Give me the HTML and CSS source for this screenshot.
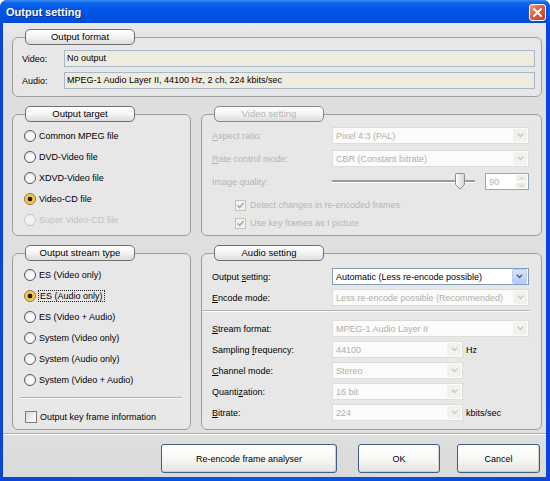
FILE: index.html
```html
<!DOCTYPE html>
<html lang="en">
<head>
  <meta charset="UTF-8" />
  <meta name="viewport" content="width=device-width, initial-scale=1.0" />
  <title>Output setting</title>
  <link rel="stylesheet" href="styles.css">
</head>
<body>
  <div class="window">
    <div class="titlebar">
      <span class="title">Output setting</span>
      <span class="close">
        <svg width="9" height="9" viewBox="0 0 9 9"><path d="M1 1 L8 8 M8 1 L1 8" stroke="#fff" stroke-width="1.8" stroke-linecap="round"/></svg>
      </span>
    </div>

    <div class="client">
      <fieldset class="group format">
        <legend><span>Output format</span></legend>
        <div class="format-body">
          <div class="frow"><span class="flabel">Video:</span><div class="field">No output</div></div>
          <div class="frow"><span class="flabel">Audio:</span><div class="field">MPEG-1 Audio Layer II, 44100 Hz, 2 ch, 224 kbits/sec</div></div>
        </div>
      </fieldset>

      <div class="panes">
        <!-- output target -->
        <fieldset class="group">
          <legend><span>Output target</span></legend>
          <div class="opts">
            <div class="opt"><span class="radio"></span>Common MPEG file</div>
            <div class="opt"><span class="radio"></span>DVD-Video file</div>
            <div class="opt"><span class="radio"></span>XDVD-Video file</div>
            <div class="opt checked"><span class="radio"></span>Video-CD file</div>
            <div class="opt disabled"><span class="radio"></span>Super Video-CD file</div>
          </div>
        </fieldset>

        <!-- video setting (disabled) -->
        <fieldset class="group off">
          <legend><span>Video setting</span></legend>
          <div class="settings video">
            <div class="row">
              <span class="lbl"><u>A</u>spect ratio:</span>
              <div class="combo">
                <span class="val">Pixel 4:3 (PAL)</span>
                <span class="arrow"><svg width="7" height="5" viewBox="0 0 7 5"><path d="M0.8 0.8 L3.5 3.5 L6.2 0.8" fill="none" stroke="currentColor" stroke-width="1.5"/></svg></span>
              </div>
            </div>
            <div class="row">
              <span class="lbl"><u>R</u>ate control mode:</span>
              <div class="combo">
                <span class="val">CBR (Constant bitrate)</span>
                <span class="arrow"><svg width="7" height="5" viewBox="0 0 7 5"><path d="M0.8 0.8 L3.5 3.5 L6.2 0.8" fill="none" stroke="currentColor" stroke-width="1.5"/></svg></span>
              </div>
            </div>
            <div class="row">
              <span class="lbl">Image quality:</span>
              <div class="slider">
                <span class="track left"></span>
                <svg class="thumb" width="10" height="17" viewBox="0 0 10 17">
                  <defs><linearGradient id="tg" x1="0" x2="1"><stop offset="0" stop-color="#fff"/><stop offset="1" stop-color="#d4d4d4"/></linearGradient></defs>
                  <path d="M1.5 0.5 H8.5 Q9.5 0.5 9.5 1.5 V11.5 L5 16.2 L0.5 11.5 V1.5 Q0.5 0.5 1.5 0.5 Z" fill="url(#tg)" stroke="#8c8c8c"/>
                </svg>
                <span class="track"></span>
              </div>
              <div class="spin">
                <span class="val">90</span>
                <span class="spin-btns">
                  <span class="sb"><svg width="5" height="3" viewBox="0 0 5 3"><path d="M0.5 2.5 L2.5 0.5 L4.5 2.5" fill="none" stroke="currentColor"/></svg></span>
                  <span class="sb"><svg width="5" height="3" viewBox="0 0 5 3"><path d="M0.5 0.5 L2.5 2.5 L4.5 0.5" fill="none" stroke="currentColor"/></svg></span>
                </span>
              </div>
            </div>
            <div class="check-row">
              <span class="box on"><svg width="9" height="9" viewBox="0 0 9 9"><path d="M1.5 4.3 L3.6 6.5 L7.6 2" fill="none" stroke="currentColor" stroke-width="1.7"/></svg></span>
              Detect changes in re-encoded frames
            </div>
            <div class="check-row">
              <span class="box on"><svg width="9" height="9" viewBox="0 0 9 9"><path d="M1.5 4.3 L3.6 6.5 L7.6 2" fill="none" stroke="currentColor" stroke-width="1.7"/></svg></span>
              Use key frames as I picture
            </div>
          </div>
        </fieldset>

        <!-- output stream type -->
        <fieldset class="group">
          <legend><span>Output stream type</span></legend>
          <div class="opts">
            <div class="opt"><span class="radio"></span>ES (Video only)</div>
            <div class="opt checked"><span class="radio"></span><span class="focus">ES (Audio only)</span></div>
            <div class="opt"><span class="radio"></span>ES (Video + Audio)</div>
            <div class="opt"><span class="radio"></span>System (Video only)</div>
            <div class="opt"><span class="radio"></span>System (Audio only)</div>
            <div class="opt"><span class="radio"></span>System (Video + Audio)</div>
            <div class="sep"></div>
            <div class="key-row"><span class="box"></span>Output key frame information</div>
          </div>
        </fieldset>

        <!-- audio setting -->
        <fieldset class="group">
          <legend><span>Audio setting</span></legend>
          <div class="settings audio">
            <div class="row">
              <span class="lbl">Output <u>s</u>etting:</span>
              <div class="combo active">
                <span class="val">Automatic (Less re-encode possible)</span>
                <span class="arrow"><svg width="7" height="5" viewBox="0 0 7 5"><path d="M0.8 0.8 L3.5 3.5 L6.2 0.8" fill="none" stroke="currentColor" stroke-width="1.5"/></svg></span>
              </div>
            </div>
            <div class="row">
              <span class="lbl"><u>E</u>ncode mode:</span>
              <div class="combo">
                <span class="val">Less re-encode possible (Recommended)</span>
                <span class="arrow"><svg width="7" height="5" viewBox="0 0 7 5"><path d="M0.8 0.8 L3.5 3.5 L6.2 0.8" fill="none" stroke="currentColor" stroke-width="1.5"/></svg></span>
              </div>
            </div>
            <div class="sep wide"></div>
            <div class="row">
              <span class="lbl"><u>S</u>tream format:</span>
              <div class="combo">
                <span class="val">MPEG-1 Audio Layer II</span>
                <span class="arrow"><svg width="7" height="5" viewBox="0 0 7 5"><path d="M0.8 0.8 L3.5 3.5 L6.2 0.8" fill="none" stroke="currentColor" stroke-width="1.5"/></svg></span>
              </div>
            </div>
            <div class="row">
              <span class="lbl">Sampling <u>f</u>requency:</span>
              <div class="combo short">
                <span class="val">44100</span>
                <span class="arrow"><svg width="7" height="5" viewBox="0 0 7 5"><path d="M0.8 0.8 L3.5 3.5 L6.2 0.8" fill="none" stroke="currentColor" stroke-width="1.5"/></svg></span>
              </div>
              <span class="unit">Hz</span>
            </div>
            <div class="row">
              <span class="lbl"><u>C</u>hannel mode:</span>
              <div class="combo short">
                <span class="val">Stereo</span>
                <span class="arrow"><svg width="7" height="5" viewBox="0 0 7 5"><path d="M0.8 0.8 L3.5 3.5 L6.2 0.8" fill="none" stroke="currentColor" stroke-width="1.5"/></svg></span>
              </div>
            </div>
            <div class="row">
              <span class="lbl">Quanti<u>z</u>ation:</span>
              <div class="combo short">
                <span class="val">16 bit</span>
                <span class="arrow"><svg width="7" height="5" viewBox="0 0 7 5"><path d="M0.8 0.8 L3.5 3.5 L6.2 0.8" fill="none" stroke="currentColor" stroke-width="1.5"/></svg></span>
              </div>
            </div>
            <div class="row">
              <span class="lbl"><u>B</u>itrate:</span>
              <div class="combo short">
                <span class="val">224</span>
                <span class="arrow"><svg width="7" height="5" viewBox="0 0 7 5"><path d="M0.8 0.8 L3.5 3.5 L6.2 0.8" fill="none" stroke="currentColor" stroke-width="1.5"/></svg></span>
              </div>
              <span class="unit">kbits/sec</span>
            </div>
          </div>
        </fieldset>
      </div>

      <div class="footer">
        <div class="footer-line"></div>
        <div class="buttons">
          <button class="btn analyser">Re-encode frame analyser</button>
          <button class="btn ok">OK</button>
          <button class="btn cancel">Cancel</button>
        </div>
      </div>
    </div>
  </div>
</body>
</html>
```

FILE: styles.css
```css
* {
  box-sizing: border-box;
}
body {
  margin: 0;
  font-family: "Liberation Sans", Arial, sans-serif;
  font-size: 9px;
  color: #000;
  background: #fff;
}
u {
  text-decoration: underline;
  text-underline-offset: 1px;
}

/* window frame */
.window {
  width: 550px;
  height: 481px;
  display: flex;
  flex-direction: column;
  background: linear-gradient(90deg, #0846d6, #0a54e4 50%, #0846d6);
  border-radius: 7px 7px 0 0;
}
.titlebar {
  height: 23px;
  flex: none;
  display: flex;
  align-items: center;
  padding: 0 4px 0 6px;
  border-radius: 7px 7px 0 0;
  background: linear-gradient(#3b8cf6 0, #0c63ea 3px, #0058e6 9px, #0054e2 15px, #004cd8 23px);
  color: #fff;
}
.title {
  flex: 1;
  font-weight: bold;
  font-size: 11px;
  text-shadow: 1px 1px #0b2a8c;
  padding-top: 1px;
}
.close {
  width: 17px;
  height: 17px;
  margin-top: 2px;
  display: flex;
  align-items: center;
  justify-content: center;
  border: 1px solid #fff;
  border-radius: 3px;
  background: linear-gradient(135deg, #f29a7c, #e0603c 45%, #c8401c);
}

.client {
  flex: 1;
  margin: 0 4px 4px 3px;
  padding: 6px 4px 0 9px;
  display: flex;
  flex-direction: column;
  background: linear-gradient(#e9e9e9, #dedede 30px, #e0e0e0 400px, #dadada);
}

/* group boxes */
.group {
  margin: 0;
  padding: 0;
  min-width: 0;
  border: 1px solid #9e9e9e;
  border-radius: 6px;
  background: #e7e7e7;
}
.group legend {
  margin-left: 12px;
  padding: 0;
  width: 110px;
  height: 16px;
  line-height: 14px;
  text-align: left;
  border: 1px solid #6f6f6f;
  border-radius: 5px;
  background: linear-gradient(#fff, #f4f4f4 50%, #dcdcdc);
}
.group legend span {
  display: block;
  text-align: center;
  font-size: 9.5px;
}
.group.off legend {
  color: #b4b4b4;
  border-color: #8a8a8a;
}

.format {
  height: 68px;
  flex: none;
}
.format-body {
  padding: 5px 6px 0 9px;
  display: flex;
  flex-direction: column;
  gap: 5px;
}
.frow {
  display: flex;
  align-items: center;
}
.flabel {
  width: 42px;
}
.field {
  flex: 1;
  height: 17px;
  line-height: 15px;
  padding-left: 2px;
  background: #efebde;
  border: 1px solid #a6b9cb;
}

.panes {
  display: grid;
  grid-template-columns: 179px 341px;
  grid-template-rows: 130px 185px;
  column-gap: 10px;
  row-gap: 9px;
  margin-top: 9px;
}

/* radio lists */
.opts {
  padding-top: 3px;
}
.opt {
  height: 21px;
  display: flex;
  align-items: center;
  gap: 3px;
  padding-left: 11px;
}
.radio {
  width: 12px;
  height: 12px;
  border-radius: 50%;
  border: 1px solid #4f5a66;
  background: radial-gradient(circle at 60% 60%, #fff 0, #f4f4f1 50%, #d6d6ce);
}
.opt.checked .radio {
  border-color: #8a7436;
  background: radial-gradient(circle, #1e2010 0, #1e2010 2px, #e8b224 2.6px, #f8d560 4.5px, #f3cc58);
}
.opt.disabled {
  color: #c3c3c3;
}
.opt.disabled .radio {
  border-color: #c8c8c4;
  background: #f2f2f0;
}
.focus {
  outline: 1px dotted #222;
  outline-offset: 0;
  padding: 0 1px;
}
.sep {
  margin: 7px 8px 0 7px;
  border-top: 1px solid #b2b2b2;
  border-bottom: 1px solid #fafafa;
}
.key-row {
  height: 21px;
  margin-top: 7px;
  display: flex;
  align-items: center;
  gap: 3px;
  padding-left: 12px;
}

/* check boxes */
.box {
  width: 12px;
  height: 12px;
  display: flex;
  align-items: center;
  justify-content: center;
  border: 1px solid #7c7c7c;
  background: linear-gradient(135deg, #d8d8d4, #f6f6f4 70%, #fff);
}
.box.on {
  width: 11px;
  height: 11px;
  color: #adada6;
  border-color: #c2c2bc;
  background: #f2f2ef;
}

/* setting panels */
.settings {
  padding: 5px 12px 0 10px;
}
.settings.audio {
  padding-top: 7px;
}
.row {
  height: 17px;
  display: flex;
  align-items: center;
  margin-bottom: 6px;
}
.audio .row {
  margin-bottom: 4px;
}
.lbl {
  width: 120px;
}
.video .lbl {
  color: #b6b6b6;
}
.combo {
  width: 197px;
  height: 17px;
  display: flex;
  align-items: center;
  padding: 0 1px 0 3px;
  background: #fbfbfb;
  border: 1px solid #dcdcda;
  color: #b0b0aa;
}
.combo.short {
  width: 131px;
}
.combo .val {
  flex: 1;
}
.combo .arrow {
  width: 14px;
  height: 13px;
  display: flex;
  align-items: center;
  justify-content: center;
  border-radius: 2px;
  background: #f1f1ee;
  color: #cbc9bd;
}
.combo.active {
  background: #fff;
  border-color: #7f9db9;
  color: #000;
}
.combo.active .arrow {
  height: 15px;
  width: 15px;
  background: linear-gradient(#d8e5fd, #b4caf8);
  border: 1px solid #b6cbf6;
  color: #4d6185;
}
.unit {
  margin-left: 3px;
}
.sep.wide {
  margin: 3px -1px 8px -10px;
}

/* slider + spin */
.slider {
  width: 144px;
  display: flex;
  align-items: center;
}
.track {
  flex: 1;
  height: 3px;
  border-top: 2px solid #9a9a9a;
  border-bottom: 1px solid #fff;
}
.track.left {
  flex: none;
  width: 123px;
}
.thumb {
  display: block;
  flex: none;
  margin-top: -1px;
}
.spin {
  width: 44px;
  height: 17px;
  margin-left: 10px;
  display: flex;
  align-items: center;
  padding: 0 1px 0 3px;
  background: #fff;
  border: 1px solid #8ea6c4;
  color: #b3b3ad;
}
.spin .val {
  flex: 1;
}
.spin-btns {
  display: flex;
  flex-direction: column;
  gap: 1px;
}
.sb {
  width: 11px;
  height: 6px;
  display: flex;
  align-items: center;
  justify-content: center;
  background: #eeeeea;
  border-radius: 1px;
  color: #c3c3bb;
}
.check-row {
  height: 18px;
  display: flex;
  align-items: center;
  gap: 4px;
  padding-left: 23px;
  color: #b6b6b6;
}
.video .row + .check-row {
  margin-top: 1px;
}

/* footer */
.footer {
  margin: 3px -4px 0 -9px;
}
.footer-line {
  border-top: 1px solid #a9a9a9;
  border-bottom: 1px solid #fbfbfb;
}
.buttons {
  display: flex;
  justify-content: flex-end;
  padding: 9px 6px 0 0;
}
.btn {
  height: 29px;
  font-family: inherit;
  font-size: 9px;
  color: #000;
  border: 1px solid #3e5e84;
  border-radius: 3px;
  background: linear-gradient(#fff, #f7f7f5 55%, #e2e2de);
  box-shadow: inset -1px -1px #d0d0ca;
  padding: 0;
}
.analyser {
  width: 176px;
  margin-right: 21px;
}
.ok {
  width: 82px;
  margin-right: 17px;
}
.cancel {
  width: 83px;
}
```
